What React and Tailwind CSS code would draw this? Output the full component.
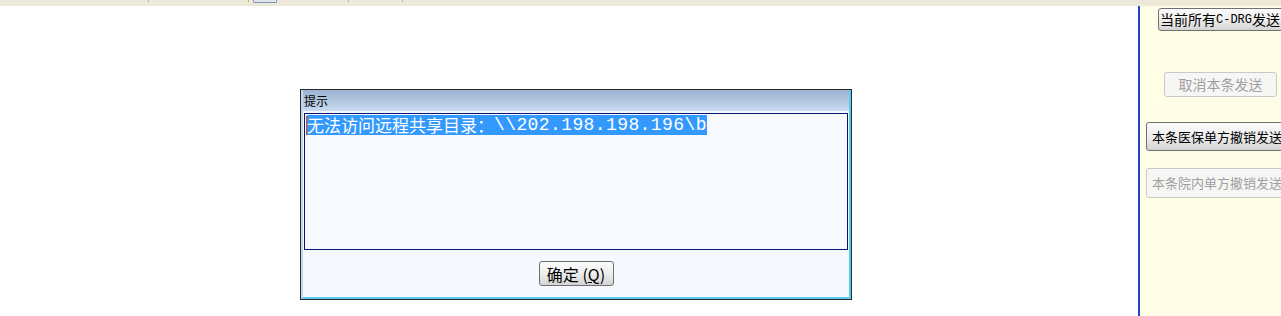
import React from 'react'

const cjk = { fontFamily: '"Noto Sans CJK SC", "Noto Sans", sans-serif' }

// raised grey button used on the side panel and in the dialog
const GreyButton = ({ className, children }) => (
  <div
    className={
      'flex items-center whitespace-nowrap rounded-[3px] border border-[#707070] bg-gradient-to-b from-[#fbfbfb] via-[#eeeeee] to-[#d4d4d4] text-black ' +
      className
    }
  >
    {children}
  </div>
)

const DisabledButton = ({ className, children }) => (
  <div
    className={
      'flex items-center whitespace-nowrap rounded-[3px] border border-[#c9c9c9] bg-[#f6f6f4] text-[#a0a0a0] ' +
      className
    }
  >
    {children}
  </div>
)

export default function App() {
  return (
    <div className="flex h-[316px] w-full flex-col overflow-hidden bg-white" style={cjk}>
      {/* top strip */}
      <div className="flex h-[6px] shrink-0 items-start bg-[#ece9d8] pl-[148px]">
        <div className="h-[2px] w-px bg-[#b5b2a4]" />
        <div className="ml-[99px] h-[2px] w-px bg-[#b5b2a4]" />
        <div className="ml-[4px] h-[3px] w-[24px] rounded-b-[2px] border-x border-b border-[#7f93b3] bg-[#dfe6ef]" />
        <div className="ml-[71px] h-[2px] w-px bg-[#b5b2a4]" />
        <div className="ml-[53px] h-[2px] w-px bg-[#b5b2a4]" />
      </div>

      <div className="flex min-h-0 flex-1">
        {/* main white area with the message box */}
        <div className="flex-1 bg-white">
          <div className="ml-[300px] mt-[83px] flex h-[211px] w-[552px] flex-col border border-[#2b2b2b]">
            <div className="flex flex-1 flex-col border-x-2 border-b-2 border-l-[#c3d8f0] border-r-[#58cdf0] border-b-[#58cdf0]">
              <div className="h-[21px] shrink-0 bg-gradient-to-b from-[#9bb3d1] to-[#c8daef] pl-[1px] text-[12px] leading-[21px] text-black">
                提示
              </div>
              <div className="flex flex-1 flex-col bg-[#f5f9ff] px-[1px] pt-[2px]">
                <div className="h-[137px] border border-[#0b1670] bg-[#f6faff] pl-[1px] pt-[1px]">
                  <div className="flex items-center">
                    <span className="h-[19px] w-[1px] bg-[#ff3b00]" />
                    <span className="flex h-[20px] items-center bg-[#3399ff] text-[17px] leading-[20px] text-white">
                      <span>无法访问远程共享目录：</span>
                      <span
                        style={{ fontFamily: '"Liberation Mono", monospace' }}
                        className="text-[18px] tracking-[0.4px]"
                      >
                        \\202.198.198.196\b
                      </span>
                    </span>
                  </div>
                </div>
                <div className="mt-[11px] flex justify-center">
                  <GreyButton className="h-[25px] w-[75px] justify-center text-[16px] leading-[20px]">
                    确定 (<span className="underline">Q</span>)
                  </GreyButton>
                </div>
              </div>
            </div>
          </div>
        </div>

        {/* right side panel */}
        <div className="flex w-[143px] shrink-0 flex-col items-start overflow-hidden border-l-2 border-[#1f45c6] bg-[#fffde6]">
          <GreyButton className="ml-[18px] mt-[2px] h-[23px] w-[132px] pl-[1px] text-[14px]">
            当前所有
            <span style={{ fontFamily: '"Liberation Mono", monospace' }} className="text-[12px]">
              C-DRG
            </span>
            发送
          </GreyButton>
          <DisabledButton className="ml-[24px] mt-[41px] h-[25px] w-[113px] justify-center text-[14px]">
            取消本条发送
          </DisabledButton>
          <GreyButton className="ml-[6px] mt-[25px] h-[29px] w-[142px] pl-[5px] text-[13px]">
            本条医保单方撤销发送
          </GreyButton>
          <DisabledButton className="ml-[6px] mt-[17px] h-[30px] w-[142px] pl-[5px] text-[13px]">
            本条院内单方撤销发送
          </DisabledButton>
        </div>
      </div>
    </div>
  )
}
